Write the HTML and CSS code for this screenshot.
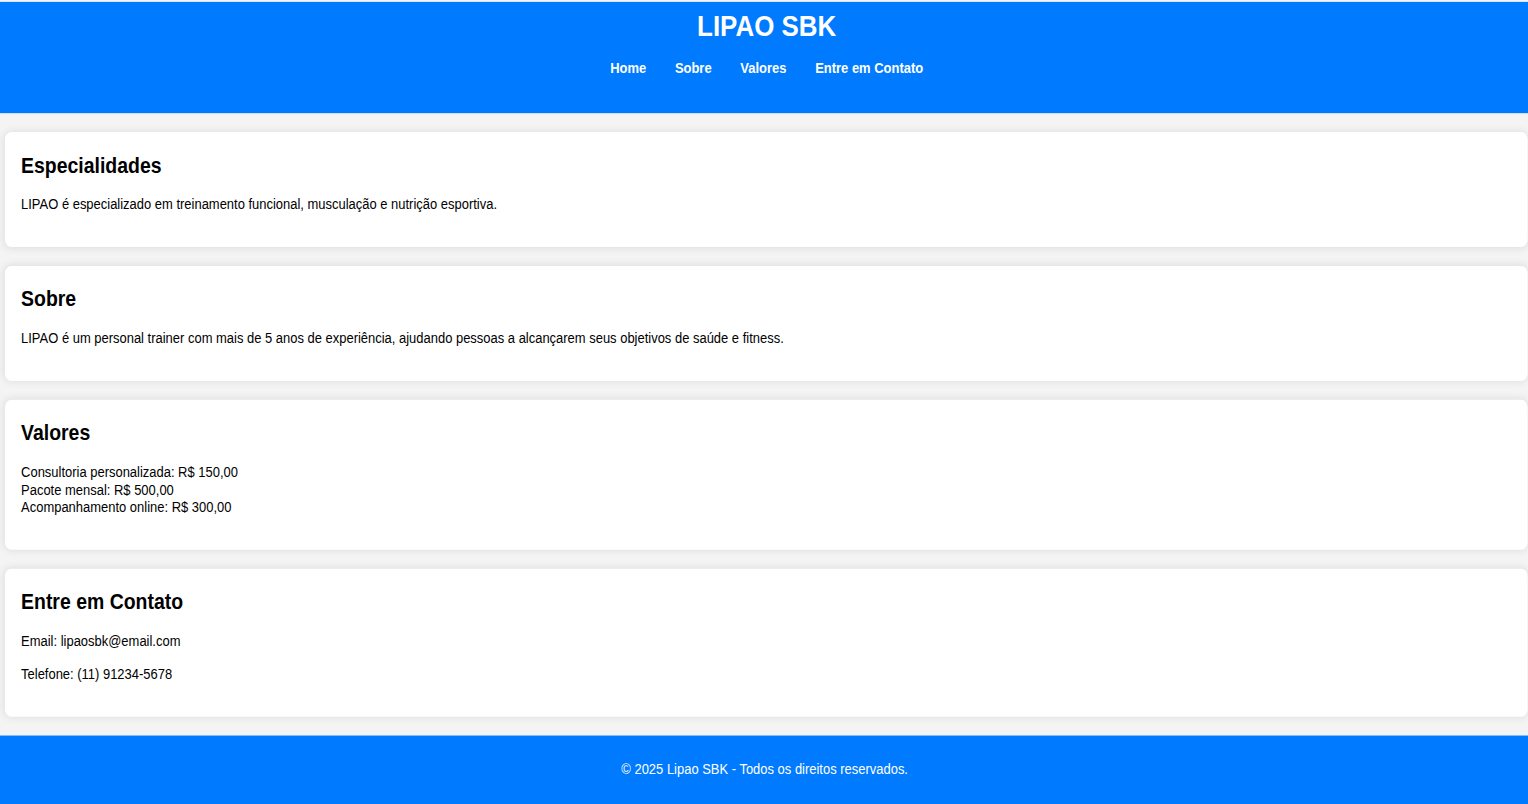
FILE: index.html
```html
<!DOCTYPE html>
<html lang="pt-BR">
<head>
<meta charset="utf-8">
<title>LIPAO SBK</title>
<link rel="stylesheet" href="styles.css">
</head>
<body>
<div class="page">
  <header class="site-header">
    <h1 class="site-title">LIPAO SBK</h1>
    <nav class="site-nav">
      <a href="#especialidades">Home</a>
      <a href="#sobre">Sobre</a>
      <a href="#valores">Valores</a>
      <a href="#contato">Entre em Contato</a>
    </nav>
  </header>
  <main class="content">
    <section class="card" id="especialidades">
      <h2>Especialidades</h2>
      <p>LIPAO é especializado em treinamento funcional, musculação e nutrição esportiva.</p>
    </section>
    <section class="card" id="sobre">
      <h2>Sobre</h2>
      <p>LIPAO é um personal trainer com mais de 5 anos de experiência, ajudando pessoas a alcançarem seus objetivos de saúde e fitness.</p>
    </section>
    <section class="card" id="valores">
      <h2>Valores</h2>
      <p>Consultoria personalizada: R$ 150,00<br>Pacote mensal: R$ 500,00<br>Acompanhamento online: R$ 300,00</p>
    </section>
    <section class="card" id="contato">
      <h2>Entre em Contato</h2>
      <p>Email: lipaosbk@email.com</p>
      <p>Telefone: (11) 91234-5678</p>
    </section>
  </main>
  <footer class="site-footer">
    <p>© 2025 Lipao SBK - Todos os direitos reservados.</p>
  </footer>
</div>
</body>
</html>
```

FILE: styles.css
```css
html, body {
  margin: 0;
  padding: 0;
  overflow: hidden;
  background: #f4f4f4;
}

body {
  font-family: "Liberation Sans", Arial, sans-serif;
  font-size: 16px;
  color: #000;
}

.page {
  width: 1888px;
  transform: scale(0.81, 0.943);
  transform-origin: 0 0;
  padding-top: 2px;
  background: #f4f4f4;
}

.site-header {
  background: #007bff;
  color: #fff;
  text-align: center;
  padding: 7px 0 39px 5px;
}

.site-title {
  margin: 0;
  font-size: 32px;
  font-weight: bold;
}

.site-nav {
  margin-top: 17px;
}

.site-nav a {
  color: #fff;
  text-decoration: none;
  font-weight: bold;
  margin: 0 15.5px;
}

.content {
  padding: 20px 2px 20px 6px;
  display: flex;
  flex-direction: column;
  gap: 20px;
}

.card {
  background: #fff;
  border-radius: 8px;
  box-shadow: 0 0 10px rgba(0, 0, 0, 0.1);
  padding: 21px 20px 19.5px;
}

.card h2 {
  margin: 0 0 19px;
  font-size: 24px;
  font-weight: bold;
}

.card p {
  margin: 0 0 16px;
  line-height: 18.5px;
}

.site-footer {
  background: #007bff;
  color: #fff;
  text-align: center;
  padding: 27px 0 40px;
}

.site-footer p {
  margin: 0;
}
```
